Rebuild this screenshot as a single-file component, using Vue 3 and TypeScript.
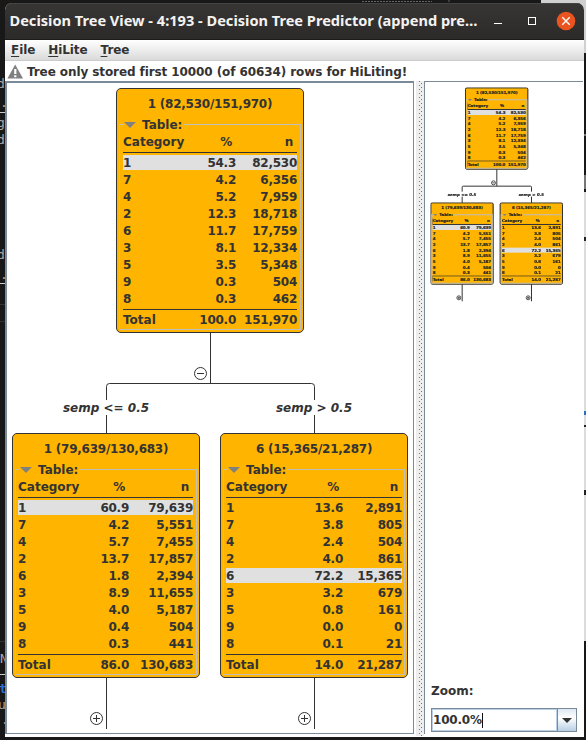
<script setup lang="ts">
interface Row { cat: string; pct: string; n: string }
interface TreeNode {
  id: string; x: number; y: number; title: string
  inset: number; pctEnd: number; nEnd: number; hit: string
  rows: Row[]; total: Row
}

const cats = ['1', '7', '4', '2', '6', '3', '5', '9', '8']
const makeRows = (pct: string, n: string): Row[] => {
  const p = pct.split(' ')
  const c = n.split(' ')
  return cats.map((cat, i) => ({ cat, pct: p[i], n: c[i] }))
}

const nodes: TreeNode[] = [
  {
    id: 'root', x: 109, y: 5, title: '1 (82,530/151,970)', inset: 7, pctEnd: 113, nEnd: 174, hit: '1',
    rows: makeRows('54.3 4.2 5.2 12.3 11.7 8.1 3.5 0.3 0.3', '82,530 6,356 7,959 18,718 17,759 12,334 5,348 504 462'),
    total: { cat: 'Total', pct: '100.0', n: '151,970' },
  },
  {
    id: 'low', x: 5, y: 350, title: '1 (79,639/130,683)', inset: 6, pctEnd: 111, nEnd: 175, hit: '1',
    rows: makeRows('60.9 4.2 5.7 13.7 1.8 8.9 4.0 0.4 0.3', '79,639 5,551 7,455 17,857 2,394 11,655 5,187 504 441'),
    total: { cat: 'Total', pct: '86.0', n: '130,683' },
  },
  {
    id: 'high', x: 213, y: 350, title: '6 (15,365/21,287)', inset: 6, pctEnd: 117, nEnd: 176, hit: '6',
    rows: makeRows('13.6 3.8 2.4 4.0 72.2 3.2 0.8 0.0 0.1', '2,891 805 504 861 15,365 679 161 0 21'),
    total: { cat: 'Total', pct: '14.0', n: '21,287' },
  },
]

const place = (n: TreeNode) => ({
  left: n.x + 'px',
  top: n.y + 'px',
  '--inset': n.inset + 'px',
  '--pct': n.pctEnd + 'px',
  '--n': n.nEnd - n.pctEnd + 'px',
})
const views = ['main', 'mini']
</script>

<template>
  <div class="desktop">
    <svg class="backdrop" width="586" height="740">
      <path d="M541 0H586V53H541z" fill="#d0d0d0" />
      <path d="M584 192h2V641h-2z" fill="#dcdcdc" />
      <path d="M584 134h2v2h-2zM584 175h2v14h-2z" fill="#777" />
      <path d="M584 237h2v4h-2zM584 425h2v2h-2zM584 490h2v5h-2z" fill="#222" />
      <path d="M584 411h2v4h-2z" fill="#2a6fc0" />
      <path d="M362 1.5h70M449 0v3" stroke="#666" stroke-dasharray="2 1" />
      <path d="M0 112.5h5M0 283.5h5M0 674.5h5" stroke="#ccc" />
      <path d="M0 304.5h5M0 321.5h5M0 641.5h5" stroke="#333" />
      <g class="term">
        <text x="-3" y="88">d</text><text x="0" y="107">.</text><text x="-3" y="127">g</text><text x="-3" y="144">d</text>
        <text x="-3" y="259">d</text><text x="0" y="279">.</text><text x="0" y="663">N</text>
        <text x="-1" y="693" class="blue">t</text><text x="-2" y="709">u</text><text x="1" y="724">.</text>
      </g>
    </svg>
    <div class="window">
      <header class="titlebar">
        <svg class="title" width="480" height="36">
          <text x="4.5" y="23" textLength="468" lengthAdjust="spacingAndGlyphs">Decision Tree View - 4:193 - Decision Tree Predictor (append pre…</text>
        </svg>
        <svg class="controls" width="92" height="36" viewBox="8 0 92 36" fill="none" stroke="#fff">
          <path d="M17 20.5h8" stroke-width="1.2" />
          <rect x="51.5" y="14.5" width="7" height="7" />
          <circle cx="89" cy="18" r="9.3" fill="#e95420" stroke="none" />
          <path d="M85.3 14.3l7.4 7.4M92.7 14.3l-7.4 7.4" stroke-width="1.4" />
        </svg>
      </header>
      <nav class="menubar">
        <span><u>F</u>ile</span><span><u>H</u>iLite</span><span><u>T</u>ree</span>
      </nav>
      <div class="warning">
        <svg width="17" height="15"><path d="M8.2 0.5L16 14.5H0.4z" fill="#808080" /><path d="M7.2 5h2.2v5H7.2zM7.2 11.3h2.2v2H7.2z" fill="#fff" /></svg>
        <span>Tree only stored first 10000 (of 60634) rows for HiLiting!</span>
      </div>
      <main class="split">
        <template v-for="view in views" :key="view">
          <div v-if="view === 'mini'" class="divider"></div>
          <section class="pane" :class="view">
            <div class="tree">
              <svg class="links" width="406" height="651" fill="none">
                <path d="M203.5 249V300.5M99.5 317V303.5Q99.5 300.5 102.5 300.5H304.5Q307.5 300.5 307.5 303.5V317M99.5 332V351M307.5 332V351M99.5 594V646M307.5 594V646" />
                <g>
                  <circle cx="193.5" cy="290.5" r="6" /><path d="M190 290.5h7" />
                  <circle cx="89.5" cy="635.5" r="6" /><path d="M86 635.5h7M89.5 632v7" />
                  <circle cx="297.5" cy="635.5" r="6" /><path d="M294 635.5h7M297.5 632v7" />
                </g>
              </svg>
              <span class="cond low">semp &lt;= 0.5</span>
              <span class="cond high">semp &gt; 0.5</span>
              <article v-for="n in nodes" :key="n.id" class="node" :style="place(n)">
                <h3>{{ n.title }}</h3>
                <div class="frame">
                  <div class="legend"><i></i><b>Table:</b></div>
                </div>
                <div class="table">
                  <div class="row head"><span>Category</span><span>%</span><span>n</span></div>
                  <div v-for="r in n.rows" :key="r.cat" class="row" :class="{ hit: r.cat === n.hit }">
                    <span>{{ r.cat }}</span><span>{{ r.pct }}</span><span>{{ r.n }}</span>
                  </div>
                  <div class="row total"><span>{{ n.total.cat }}</span><span>{{ n.total.pct }}</span><span>{{ n.total.n }}</span></div>
                </div>
              </article>
            </div>
            <div v-if="view === 'mini'" class="zoom">
              <label>Zoom:</label>
              <div class="combo">
                <div class="field">100.0%<i></i></div>
                <div class="arrow"><svg width="12" height="7"><path d="M1 1h10L6 6z" fill="#333" /></svg></div>
              </div>
            </div>
          </section>
        </template>
      </main>
    </div>
  </div>
</template>

<style>
body { margin: 0; background: #181818; }
</style>
<style scoped>
.desktop { position: relative; width: 586px; height: 740px; box-sizing: border-box; padding: 3px 2px 3px 5px; background: #181818; overflow: hidden; font: bold 12px/17px "DejaVu Sans", sans-serif; color: #333; }
.backdrop { position: absolute; left: 0; top: 0; }
.term { font: 13px "DejaVu Sans Mono", monospace; fill: #aaa; }
.term .blue { fill: #2a6fd0; font-weight: bold; }
.window { position: relative; width: 579px; height: 734px; display: flex; flex-direction: column; background: #fff; border-radius: 7px 7px 0 0; overflow: hidden; }
.titlebar { height: 37px; display: flex; background: linear-gradient(#383635, #2c2a29); box-shadow: inset 0 1px #454341, inset 0 -1px #1d1b1b; flex: none; }
.title { font: bold 15px "Noto Sans", sans-serif; fill: #f4f3f1; }
.menubar { height: 20px; flex: none; border-bottom: 1px solid #ccc; background: linear-gradient(#fff, #dadada); display: flex; gap: 13px; padding-left: 6px; line-height: 20px; letter-spacing: -0.08px; }
.menubar u { text-underline-offset: 2px; }
.warning { height: 20px; flex: none; display: flex; align-items: center; gap: 3px; padding-left: 2px; white-space: nowrap; letter-spacing: -0.09px; }
.warning span { line-height: 20px; padding-top: 2px; }
.split { flex: 1; display: flex; min-height: 0; }
.pane { box-sizing: border-box; height: 653px; position: relative; overflow: hidden; }
.pane.main { width: 409px; border: solid #7a8a99; border-width: 2px 1px 1px 2px; }
.pane.mini { width: 159px; border: solid #7a8a99; border-width: 1px 0 0 1px; display: flex; flex-direction: column; justify-content: space-between; }
.divider {
  width: 8px; height: 655px; margin-left: 2px; background-color: #eee;
  background-image: repeating-linear-gradient(#777 0 1px, transparent 1px 4px), repeating-linear-gradient(transparent 0 2px, #777 2px 3px, transparent 3px 4px);
  background-size: 1px 100%; background-position: 3px 0, 5px 0; background-repeat: no-repeat;
}
.tree { position: relative; width: 406px; height: 650px; flex: none; letter-spacing: -0.25px; }
.mini .tree { height: 217px; transform: scale(0.3333); transform-origin: 0 0; margin: 4px 0 0 4px; color: #222; -webkit-text-stroke: 0.6px #222; }
.links { position: absolute; left: 0; top: 0; stroke: #333; }
.mini .links { stroke-width: 3; }
.mini .links g { stroke-width: 2.5; }
.cond { position: absolute; top: 317px; width: 120px; text-align: center; font-style: italic; letter-spacing: 0; }
.cond.low { left: 39px; }
.cond.high { left: 247px; }
.node { position: absolute; width: 188px; height: 245px; box-sizing: border-box; border: 1px solid #333; border-radius: 5px; background: #ffb400; }
.mini .node { outline: 3px solid #333; outline-offset: -2px; }
.node h3 { margin: 7px 0 0; font: inherit; text-align: center; }
.frame { position: absolute; left: 2px; top: 35px; width: 182px; height: 206px; box-sizing: border-box; border: 1px solid #c0bfbb; }
.mini .frame { box-shadow: 0 0 0 1px #c0bfbb, inset 0 0 0 1px #c0bfbb; }
.legend { position: absolute; left: 4px; top: -9px; display: flex; align-items: center; background: #ffb400; padding-right: 2px; letter-spacing: 0; }
.legend i { border: solid transparent; border-width: 6px 6px 0; border-top-color: #808080; margin-right: 6px; }
.legend b { line-height: 17px; position: relative; top: 1px; }
.table { position: relative; margin: 20px 0 0 calc(var(--inset) - 1px); display: flex; flex-direction: column; width: calc(var(--pct) + var(--n)); }
.row { display: grid; grid-template-columns: 63px calc(var(--pct) - 63px) var(--n); height: 15px; line-height: 17px; margin-bottom: 2px; white-space: nowrap; }
.row span:first-child { letter-spacing: 0; }
.row span + span { text-align: right; }
.row.head { height: 19px; line-height: 19px; border-bottom: 1px solid #333; }
.mini .row.head { box-shadow: 0 2px #333; }
.row.head span + span { padding-right: 4px; }
.row.hit { background: #e0e0e0; }
.row.total { margin-top: 1px; border-top: 1px solid #333; padding-top: 2px; }
.mini .row.total { box-shadow: 0 -2px #333; }
.zoom { padding: 0 0 2px 6px; }
.zoom label { display: block; margin-bottom: 8px; }
.combo { display: flex; width: 146px; height: 24px; box-sizing: border-box; border: 1px solid #7a8a99; }
.field { flex: 1; display: flex; align-items: center; padding-left: 1px; box-shadow: inset 0 0 0 1px #b8cfe5; letter-spacing: -0.2px; }
.field i { width: 1px; height: 15px; background: #111; }
.arrow { width: 18px; border-left: 1px solid #7a8a99; display: grid; place-items: center; background: linear-gradient(#dde8f3, #fff 40%, #b8cfe5); }
</style>
